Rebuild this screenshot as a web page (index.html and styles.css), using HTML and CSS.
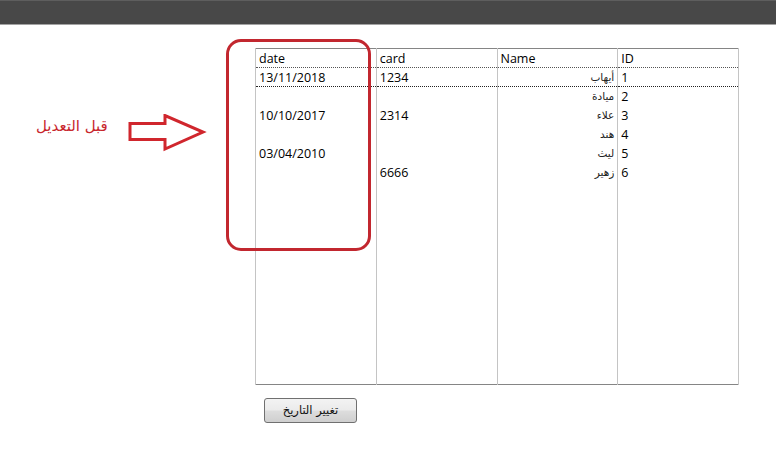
FILE: index.html
```html
<!DOCTYPE html>
<html lang="ar">
<head>
    <meta charset="UTF-8">
    <title>تغيير التاريخ</title>
    <link rel="stylesheet" href="styles.css">
</head>
<body>
    <div class="page">
        <div class="topbar"></div>

        <div class="main">
            <table class="grid">
                <colgroup>
                    <col class="col">
                    <col class="col">
                    <col class="col">
                    <col class="col">
                </colgroup>
                <thead>
                    <tr>
                        <th>date</th>
                        <th>card</th>
                        <th>Name</th>
                        <th>ID</th>
                    </tr>
                </thead>
                <tbody>
                    <tr class="selected">
                        <td>13/11/2018</td>
                        <td>1234</td>
                        <td class="name">أيهاب</td>
                        <td>1</td>
                    </tr>
                    <tr>
                        <td></td>
                        <td></td>
                        <td class="name">ميادة</td>
                        <td>2</td>
                    </tr>
                    <tr>
                        <td>10/10/2017</td>
                        <td>2314</td>
                        <td class="name">علاء</td>
                        <td>3</td>
                    </tr>
                    <tr>
                        <td></td>
                        <td></td>
                        <td class="name">هند</td>
                        <td>4</td>
                    </tr>
                    <tr>
                        <td>03/04/2010</td>
                        <td></td>
                        <td class="name">ليث</td>
                        <td>5</td>
                    </tr>
                    <tr>
                        <td></td>
                        <td>6666</td>
                        <td class="name">زهير</td>
                        <td>6</td>
                    </tr>
                    <!-- باقي المساحة الفارغة -->
                    <tr class="filler">
                        <td></td>
                        <td></td>
                        <td></td>
                        <td></td>
                    </tr>
                </tbody>
            </table>

            <button class="btn">تغيير التاريخ</button>
        </div>

        <!-- ملاحظات الصورة -->
        <div class="note-label">قبل التعديل</div>
        <svg class="note-arrow" width="80" height="40" viewBox="0 0 80 40">
            <polygon points="2,9.5 37,9.5 37,1.5 75,18 37,35 37,25.5 2,25.5" fill="none" stroke="#d0262d" stroke-width="3" stroke-linejoin="miter"/>
        </svg>
        <div class="note-box"></div>
    </div>
</body>
</html>
```

FILE: styles.css
```css
body {
    margin: 0;
    background-color: #fff;
    font-family: 'Open Sans', 'DejaVu Sans', sans-serif;
    color: #000;
}
.page {
    position: relative;
    width: 776px;
    height: 470px;
}
.topbar {
    height: 23px;
    background-color: #484848;
    border-top: 1px solid #5e5e5e;
    border-bottom: 1px solid #a3a3a3;
}
.main {
    padding: 23px 0 0 255px;
}
.grid {
    width: 484px;
    height: 337px;
    border-collapse: collapse;
    table-layout: fixed;
    border: 1px solid #858585;
    font-size: 12.5px;
}
.grid tr {
    height: 19px;
}
.grid th,
.grid td {
    padding: 0 2px 0 3px;
    border-left: 1px solid #c4c4c4;
    border-right: 1px solid #c4c4c4;
    text-align: left;
    font-weight: normal;
    line-height: 17px;
    white-space: nowrap;
    vertical-align: middle;
}
.grid th {
    border-bottom: 1px dotted #555;
}
.grid td.name {
    direction: rtl;
    text-align: right;
    padding-right: 3px;
    font-family: 'DejaVu Sans', sans-serif;
    font-size: 10.5px;
    color: #222;
}
.grid tr.selected td {
    border-top: 1px dotted #222;
    border-bottom: 1px dotted #222;
}
.grid tr.filler {
    height: auto;
}
.btn {
    display: block;
    margin: 13px 0 0 9px;
    width: 93px;
    height: 25px;
    padding: 0 0 2px;
    border: 1px solid #707070;
    border-radius: 3px;
    background: linear-gradient(#f3f3f3 0%, #ebebeb 48%, #dddddd 52%, #cfcfcf 100%);
    font-family: 'DejaVu Sans', sans-serif;
    font-size: 11.5px;
    color: #111;
}
.note-label {
    position: absolute;
    left: 36px;
    top: 117px;
    direction: rtl;
    font-family: 'DejaVu Sans', sans-serif;
    font-size: 15px;
    color: #c8262d;
}
.note-arrow {
    position: absolute;
    left: 128px;
    top: 114px;
}
.note-box {
    position: absolute;
    left: 226px;
    top: 39px;
    width: 139px;
    height: 206px;
    border: 3px solid #c2272f;
    border-radius: 15px;
}
```
